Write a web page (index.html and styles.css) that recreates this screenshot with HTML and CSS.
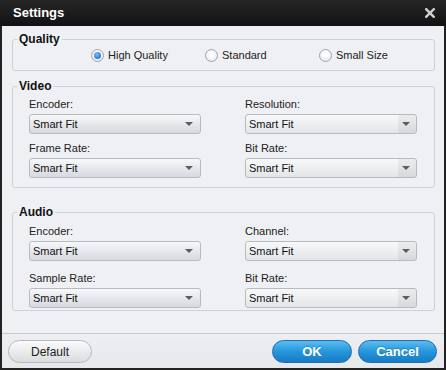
FILE: index.html
```html
<!DOCTYPE html>
<html>
<head>
<meta charset="utf-8">
<link rel="stylesheet" href="styles.css">
</head>
<body>
<div class="window">
  <div class="titlebar">
    <span class="title">Settings</span>
    <svg class="close" width="10" height="10" viewBox="0 0 10 10"><path d="M1.2 1.2 L8.8 8.8 M8.8 1.2 L1.2 8.8" stroke="#cfcfcf" stroke-width="2.4" stroke-linecap="square"/></svg>
  </div>
  <div class="content">
    <fieldset class="group quality">
      <legend>Quality</legend>
      <div class="radios">
        <label class="radio"><span class="dot on"></span>High Quality</label>
        <label class="radio"><span class="dot"></span>Standard</label>
        <label class="radio"><span class="dot"></span>Small Size</label>
      </div>
    </fieldset>
    <fieldset class="group video">
      <legend>Video</legend>
      <div class="grid">
        <div class="field"><span class="lbl">Encoder:</span><div class="dd"><span>Smart Fit</span><i class="arrow"></i></div></div>
        <div class="field"><span class="lbl">Resolution:</span><div class="dd split"><span>Smart Fit</span><i class="arrow"></i></div></div>
        <div class="field"><span class="lbl">Frame Rate:</span><div class="dd"><span>Smart Fit</span><i class="arrow"></i></div></div>
        <div class="field"><span class="lbl">Bit Rate:</span><div class="dd split"><span>Smart Fit</span><i class="arrow"></i></div></div>
      </div>
    </fieldset>
    <fieldset class="group audio">
      <legend>Audio</legend>
      <div class="grid">
        <div class="field"><span class="lbl">Encoder:</span><div class="dd"><span>Smart Fit</span><i class="arrow"></i></div></div>
        <div class="field"><span class="lbl">Channel:</span><div class="dd split"><span>Smart Fit</span><i class="arrow"></i></div></div>
        <div class="field"><span class="lbl">Sample Rate:</span><div class="dd"><span>Smart Fit</span><i class="arrow"></i></div></div>
        <div class="field"><span class="lbl">Bit Rate:</span><div class="dd split"><span>Smart Fit</span><i class="arrow"></i></div></div>
      </div>
    </fieldset>
  </div>
  <div class="footer">
    <button class="btn plain">Default</button>
    <div class="spacer"></div>
    <button class="btn blue">OK</button>
    <button class="btn blue">Cancel</button>
  </div>
</div>
</body>
</html>
```
FILE: styles.css
```css
* { box-sizing: border-box; }
html, body { margin: 0; padding: 0; }
body {
  width: 446px;
  height: 370px;
  font-family: "Liberation Sans", Arial, sans-serif;
  font-size: 11px;
  color: #1e1e1e;
  background: #222;
}
.window {
  width: 446px;
  height: 370px;
  display: flex;
  flex-direction: column;
  background: #eef0f3;
  border-left: 2px solid #222;
  border-right: 2px solid #222;
  border-bottom: 2px solid #222;
}
.titlebar {
  height: 26px;
  flex: none;
  display: flex;
  align-items: center;
  justify-content: space-between;
  margin: 0 -2px;
  padding: 0 11px 1px 13px;
  background: linear-gradient(#262626, #121212);
}
.title {
  color: #fff;
  font-weight: bold;
  font-size: 13px;
}
.close { display: block; }
.content {
  flex: 1;
  padding-top: 6px;
}
.group {
  margin: 0 9px 0 10px;
  padding: 0;
  border: 1px solid #cdd1d7;
  border-radius: 3px;
  min-width: 0;
}
.group legend {
  margin-left: 4px;
  padding: 0 2px;
  font-size: 12px;
  font-weight: bold;
  line-height: 14px;
  color: #111;
}
.video { margin-top: 8px; }
.audio { margin-top: 17px; }
.radios {
  display: flex;
  padding: 1px 0 7px 78px;
}
.radio {
  width: 114px;
  height: 16px;
  display: flex;
  align-items: center;
  gap: 4px;
  font-size: 11px;
  color: #222;
}
.dot {
  width: 13px;
  height: 13px;
  border-radius: 50%;
  border: 1px solid #a0a6ae;
  background: radial-gradient(circle at 50% 40%, #ffffff 20%, #dde0e5 100%);
  display: flex;
  align-items: center;
  justify-content: center;
}
.dot.on::after {
  content: "";
  width: 7px;
  height: 7px;
  border-radius: 50%;
  background: radial-gradient(circle at 40% 35%, #7cc0f5 0%, #2f86db 60%, #1f6cc0 100%);
}
.grid {
  display: grid;
  grid-template-columns: 172px 172px;
  column-gap: 44px;
  padding-left: 16px;
}
.video .grid { padding-top: 4px; padding-bottom: 9px; row-gap: 7px; }
.audio .grid { padding-top: 5px; padding-bottom: 2px; row-gap: 10px; }
.field {
  display: flex;
  flex-direction: column;
  gap: 3px;
}
.lbl {
  line-height: 14px;
  color: #222;
}
.dd {
  height: 20px;
  border: 1px solid #b6bbc2;
  border-radius: 3px;
  background: linear-gradient(#f7f8f9, #e4e6ea 55%, #d6d9de);
  display: flex;
  align-items: center;
  justify-content: space-between;
  padding: 0 7px 0 3px;
  color: #111;
  line-height: 18px;
}
.dd.split {
  background: linear-gradient(90deg, transparent calc(100% - 18px), rgba(0,0,0,0.05) calc(100% - 18px)), linear-gradient(#f7f8f9, #eceef1 55%, #e2e4e8);
  padding-right: 6px;
}
.arrow {
  width: 0;
  height: 0;
  border-left: 4px solid transparent;
  border-right: 4px solid transparent;
  border-top: 4px solid #5a5d62;
}
.footer {
  height: 35px;
  flex: none;
  border-top: 1px solid #c6cad0;
  display: flex;
  align-items: flex-start;
  padding: 6px 7px 0 6px;
  gap: 6px;
  background: linear-gradient(#eceef1, #e6e8eb);
}
.spacer { flex: 1; }
.btn {
  height: 23px;
  border-radius: 12px;
  font-family: "Liberation Sans", Arial, sans-serif;
  padding: 0;
  cursor: default;
}
.plain {
  width: 84px;
  border: 1px solid #b4b8be;
  background: linear-gradient(#fbfbfc, #e6e8eb 60%, #dadde1);
  color: #222;
  font-size: 12px;
}
.blue {
  width: 80px;
  border: 1px solid #1d6eab;
  background: linear-gradient(#5cbcf0, #2596dc 50%, #177bc6);
  color: #fff;
  font-weight: bold;
  font-size: 13px;
  text-shadow: 0 -1px 0 rgba(0,0,0,0.2);
}
.blue + .blue { width: 79px; }
```
